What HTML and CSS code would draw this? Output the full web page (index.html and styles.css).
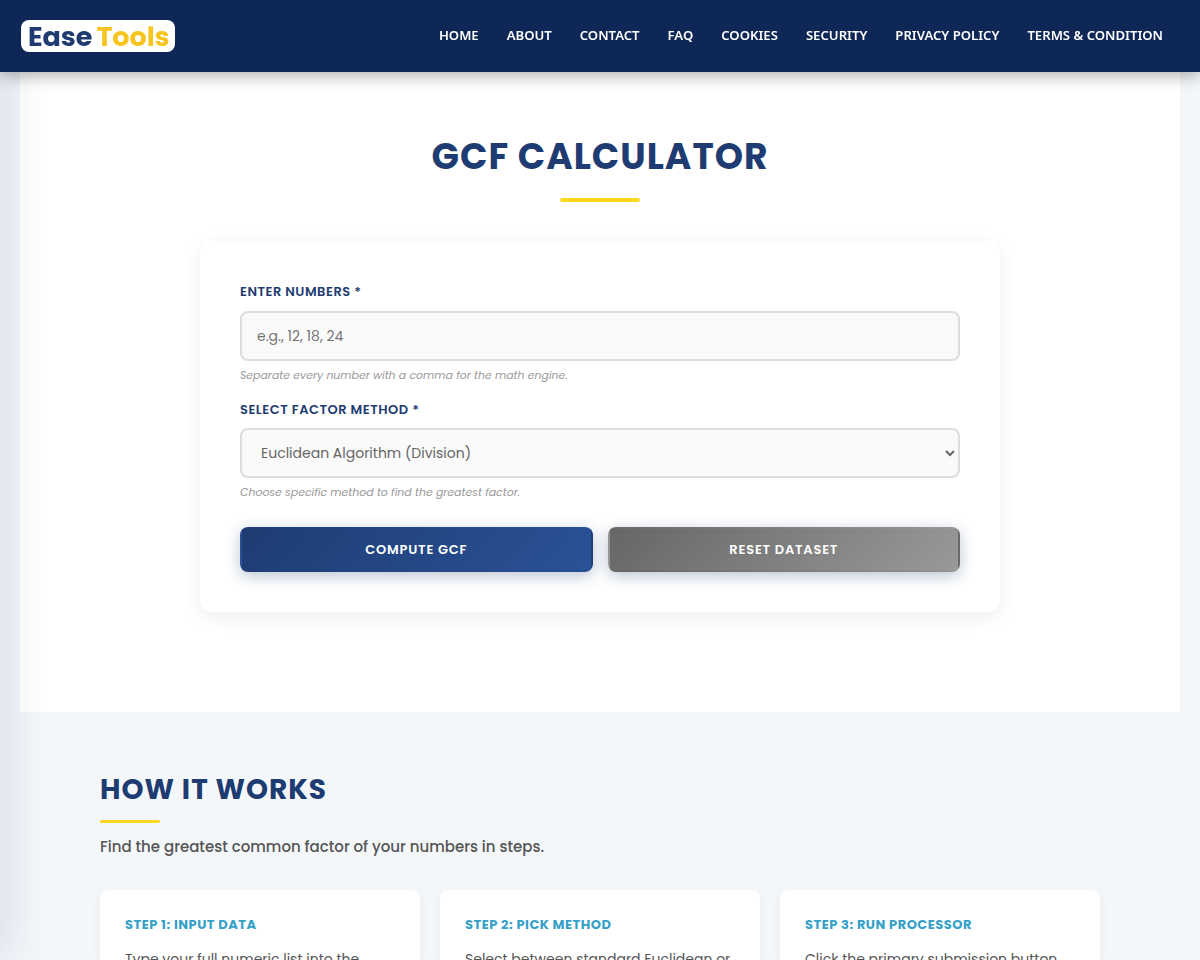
FILE: index.html
```html
<!DOCTYPE html>
<html lang="en">
<head>
<meta charset="utf-8">
<title>GCF Calculator - Ease Tools</title>
<link rel="stylesheet" href="styles.css">
</head>
<body>
<header class="header">
  <a class="logo"><span class="logo-ease">Ease</span><span class="logo-tools">Tools</span></a>
  <nav class="nav">
    <a>HOME</a><a>ABOUT</a><a>CONTACT</a><a>FAQ</a><a>COOKIES</a><a>SECURITY</a><a>PRIVACY POLICY</a><a>TERMS &amp; CONDITION</a>
  </nav>
</header>
<div class="drawer"></div>
<main class="page">
  <section class="hero">
    <h1 class="title">GCF CALCULATOR</h1>
    <div class="rule"></div>
    <form class="card">
      <label class="label" for="numbers">ENTER NUMBERS *</label>
      <input class="field" id="numbers" type="text" placeholder="e.g., 12, 18, 24">
      <p class="hint">Separate every number with a comma for the math engine.</p>
      <label class="label label-method" for="method">SELECT FACTOR METHOD *</label>
      <select class="field select" id="method"><option>Euclidean Algorithm (Division)</option></select>
      <p class="hint">Choose specific method to find the greatest factor.</p>
      <div class="actions">
        <button class="btn btn-compute" type="button">COMPUTE GCF</button>
        <button class="btn btn-reset" type="button">RESET DATASET</button>
      </div>
    </form>
  </section>
  <section class="how">
    <h2 class="how-title">HOW IT WORKS</h2>
    <div class="how-rule"></div>
    <p class="how-lead">Find the greatest common factor of your numbers in steps.</p>
    <div class="steps">
      <article class="step"><h3 class="step-title">STEP 1: INPUT DATA</h3><p class="step-text">Type your full numeric list into the</p></article>
      <article class="step"><h3 class="step-title">STEP 2: PICK METHOD</h3><p class="step-text">Select between standard Euclidean or</p></article>
      <article class="step"><h3 class="step-title">STEP 3: RUN PROCESSOR</h3><p class="step-text">Click the primary submission button</p></article>
    </div>
  </section>
</main>
</body>
</html>
```
FILE: styles.css
```css
* { box-sizing: border-box; margin: 0; padding: 0; }
html, body { height: 960px; overflow: hidden; }
body { background: #f3f7fa; font-family: Poppins, Inter, "Noto Sans", sans-serif; color: #555; }

.header {
  position: relative; z-index: 2; height: 72px; padding: 0 37px 0 20px;
  display: flex; align-items: center; justify-content: space-between;
  background: #0f2756; box-shadow: 0 4px 15px rgba(0, 0, 0, .3);
}
.logo {
  display: flex; align-items: center; gap: 4px; width: 154px; height: 32px; margin-left: .5px;
  padding: 2px 0 0 7.5px; border-radius: 8px; background: #fff;
  font-size: 27px; font-weight: 700; line-height: 32px; letter-spacing: -.05px;
}
.logo-ease { color: #1f3b70; }
.logo-tools { color: #f8c51f; }
.nav { display: flex; gap: 28px; padding-bottom: 2px; font: 600 13.13px/20px "Noto Sans", sans-serif; color: #fff; }

/* Closed side menu: only its shadow reaches the page. */
.drawer {
  position: fixed; z-index: 1; top: 0; left: -300px; width: 300px; height: 960px;
  box-shadow: 10px 0 40px rgba(15, 39, 120, .11);
}

.page { padding: 0 20px; }
.hero { height: 640px; padding-top: 60px; background: #fff; }
.title { color: #1e3c72; text-align: center; font-size: 36px; line-height: 50px; font-weight: 700; letter-spacing: 1px; }
.rule { width: 80px; height: 4px; margin: 16px auto 39px; border-radius: 2px; background: #fbd81f; }
.card {
  width: 800px; height: 371px; margin: 0 auto; padding: 41px 40px 40px; border-radius: 12px; background: #fff;
  box-shadow: 0 5px 20px rgba(0, 0, 0, .07);
}
.label { display: block; color: #1e3c72; font-size: 13px; line-height: 20px; font-weight: 600; letter-spacing: .5px; white-space: nowrap; }
.field {
  display: block; width: 100%; height: 50px; margin: 9px 0 5px; padding: 0 15px;
  border: 2px solid #ddd; border-radius: 8px; background: #fafafa; color: #666;
  font-family: inherit; font-size: 14px; outline: none;
}
.field::placeholder { color: #757575; }
.hint { color: #999; font-size: 10.92px; line-height: 20px; font-style: italic; white-space: nowrap; }
.label-method { margin-top: 14px; }
.select { margin-top: 8px; }
.actions { display: flex; gap: 15px; margin-top: 24px; }
.btn {
  flex: 1; height: 45px; border: 2px solid transparent; border-radius: 8px; color: #fff;
  font-family: inherit; font-size: 13px; font-weight: 600; letter-spacing: .8px;
  box-shadow: 0 4px 15px rgba(30, 60, 114, .3);
}
.btn-compute { background: linear-gradient(135deg, #1e3c72, #2a5298); }
.btn-reset { background: linear-gradient(135deg, #666, #999); }

.how { padding: 51px 80px 0; }
.how-title { color: #1e3c72; font-size: 28px; line-height: 54px; font-weight: 700; letter-spacing: 1px; white-space: nowrap; }
.how-rule { width: 60px; height: 3px; margin-top: 3px; border-radius: 2px; background: #fbd81f; }
.how-lead { margin-top: 11px; font-size: 15px; line-height: 26px; font-weight: 500; white-space: nowrap; }
.steps { display: grid; grid-template-columns: repeat(3, 1fr); gap: 20px; margin-top: 30px; }
.step { height: 70px; padding: 25px 25px 0; border-radius: 8px 8px 0 0; background: #fff; box-shadow: 0 3px 12px rgba(0, 0, 0, .05); }
.step-title { color: #35a0c8; font-size: 13px; line-height: 20px; font-weight: 700; letter-spacing: .5px; white-space: nowrap; }
.step-text { margin-top: 12px; font-size: 14px; line-height: 24px; white-space: nowrap; }
```
